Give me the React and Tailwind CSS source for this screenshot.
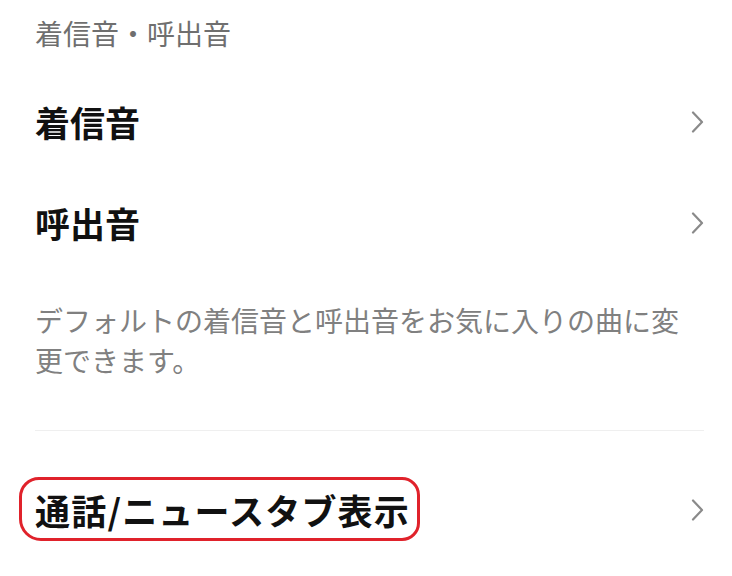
import React from "react";

const font = { fontFamily: '"Noto Sans CJK JP", "Noto Sans", sans-serif' };

function Chevron() {
  return (
    <svg width="13" height="22" viewBox="0 0 13 22" className="shrink-0">
      <path d="M2 1.5 L11 11 L2 20.5" fill="none" stroke="#8a8a8a" strokeWidth="2.2" strokeLinecap="round" strokeLinejoin="round" />
    </svg>
  );
}

function Row({ title, marked }) {
  return (
    <div className="h-[101px] flex items-center justify-between pr-[28px]">
      {marked ? (
        <span className="relative text-[35px] leading-[44px] font-bold text-[#111] tracking-[1.2px]">
          {title}
          <span className="absolute left-[-16px] right-[-10px] top-[-11px] bottom-[-9px] border-[3.5px] border-[#e0222b] rounded-[20px_18px_18px_22px]" />
        </span>
      ) : (
        <span className="text-[35px] leading-[44px] font-bold text-[#111]">{title}</span>
      )}
      <Chevron />
    </div>
  );
}

export default function App() {
  return (
    <div className="w-[732px] h-[576px] bg-white overflow-hidden pl-[35px]" style={font}>
      <div className="pt-[14px] text-[28px] leading-[38px] text-[#6f6f6f]">着信音・呼出音</div>

      <div className="mt-[19px]">
        <Row title="着信音" />
        <Row title="呼出音" />
      </div>

      <p className="mt-[27px] pr-[30px] text-[28px] leading-[40px] text-[#808080]">
        デフォルトの着信音と呼出音をお気に入りの曲に変更できます。
      </p>

      <div className="mt-[50px] mr-[28px] h-px bg-[#efefef]" />

      <div className="mt-[28px]">
        <Row title="通話/ニュースタブ表示" marked />
      </div>
    </div>
  );
}
